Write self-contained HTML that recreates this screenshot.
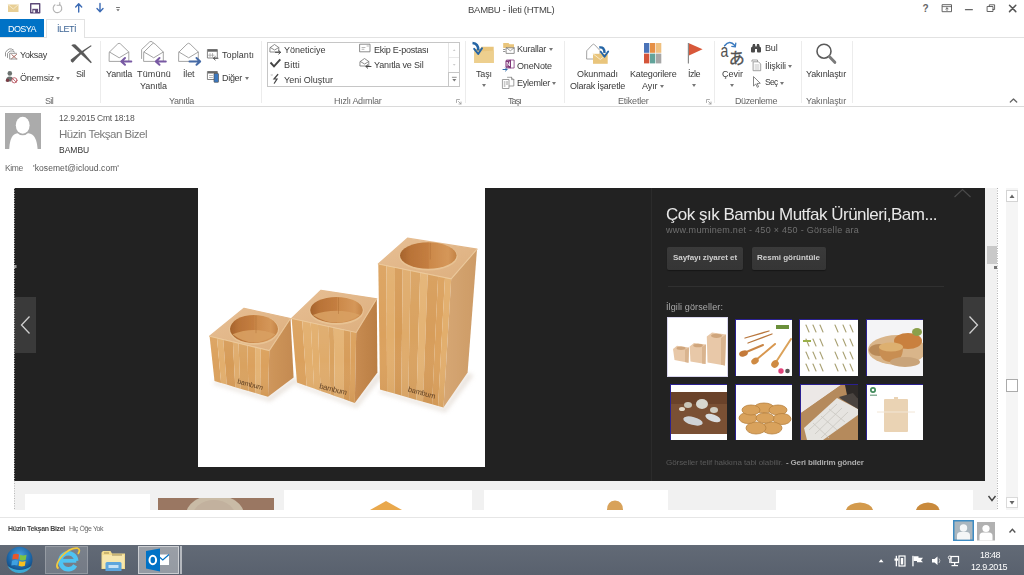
<!DOCTYPE html>
<html lang="tr">
<head>
<meta charset="utf-8">
<title>BAMBU - İleti (HTML)</title>
<style>
*{margin:0;padding:0;box-sizing:border-box}
html,body{width:1024px;height:575px;overflow:hidden;background:#fff}
body{position:relative;font-family:"Liberation Sans",sans-serif;color:#444;font-size:9px;line-height:1}
.a{position:absolute}
.t{position:absolute;white-space:nowrap;z-index:5;will-change:transform}
svg{position:absolute;overflow:visible}
#dosya{left:0;top:19px;width:44px;height:18px;background:#0072c6}
#ileti{left:46px;top:19px;width:39px;height:19px;background:#fff;border:1px solid #e2e2e2;border-bottom:none}
#tabline{left:85px;top:37px;width:939px;height:1px;background:#e2e2e2}
#tabline0{left:0;top:37px;width:46px;height:1px;background:#e2e2e2}
#ribbonline{left:0;top:106px;width:1024px;height:1px;background:#dadada}
.sep{position:absolute;top:41px;width:1px;height:62px;background:#ececec}
.dd{position:absolute;width:0;height:0;border-left:2.5px solid transparent;border-right:2.5px solid transparent;border-top:3px solid #777}
#dark{left:14px;top:188px;width:971px;height:293px;background:#222}
#photo{left:198px;top:188px;width:287px;height:279px;background:#fff}
#below{left:14px;top:481px;width:983px;height:29px;background:#f1f1f1}
#statusline{left:0;top:517px;width:1024px;height:1px;background:#e6e6e6}
#taskbar{left:0;top:545px;width:1024px;height:30px;background:linear-gradient(#626a76,#59616e)}
.card{position:absolute;background:#fff;top:490px;height:20px}
.btn{position:absolute;top:247px;height:22.500px;background:linear-gradient(#3a3a3a,#353535);border-radius:2px;box-shadow:0 1px 1px rgba(0,0,0,.35)}
.th{position:absolute;background:#fff;border-top:1px solid #2a2090;border-left:1px solid #2a2090;overflow:hidden}
</style>
</head>
<body>
<!-- TABS -->
<div class="a" id="tabline0"></div>
<div class="a" id="tabline"></div>
<div class="a" id="dosya"></div>
<div class="a" id="ileti"></div>
<!-- RIBBON -->
<div class="a" id="ribbonline"></div>
<div class="sep" style="left:100px"></div>
<div class="sep" style="left:261px"></div>
<div class="sep" style="left:465px"></div>
<div class="sep" style="left:564px"></div>
<div class="sep" style="left:714px"></div>
<div class="sep" style="left:801px"></div>
<div class="sep" style="left:852px"></div>
<!-- quick steps box -->
<div class="a" style="left:267px;top:42px;width:193px;height:45px;border:1px solid #c6c6c6;background:#fff"></div>
<div class="a" style="left:448px;top:43px;width:1px;height:29px;background:#e4e4e4"></div>
<div class="a" style="left:449px;top:57px;width:10px;height:1px;background:#e9e9e9"></div>
<div class="a" style="left:448px;top:72px;width:12px;height:15px;border:1px solid #c6c6c6;background:#fff"></div>
<!-- dropdown arrows -->
<div class="dd" style="left:55.6px;top:76.5px"></div>
<div class="dd" style="left:244.5px;top:76.5px"></div>
<div class="dd" style="left:482px;top:84px"></div>
<div class="dd" style="left:548.5px;top:48px"></div>
<div class="dd" style="left:552px;top:81.500px"></div>
<div class="dd" style="left:659.500px;top:85px"></div>
<div class="dd" style="left:691.500px;top:84px"></div>
<div class="dd" style="left:729.500px;top:84px"></div>
<div class="dd" style="left:788px;top:64.500px"></div>
<div class="dd" style="left:779.500px;top:82px"></div>
<!-- BODY -->
<div class="a" id="below"></div>
<div class="a" id="dark"></div>
<div class="a" id="photo"></div>
<!-- STATUS -->
<div class="a" id="statusline"></div>
<!-- TASKBAR -->
<div class="a" id="taskbar"></div>

<!-- TEXT -->
<div class="t" style="left:467.5px;top:3.5px;font-size:9.5px;line-height:12px;color:#444;letter-spacing:-0.27px;">BAMBU - İleti (HTML)</div>
<div class="t" style="left:8.0px;top:22.5px;font-size:9px;line-height:12px;color:#fff;letter-spacing:-0.57px;">DOSYA</div>
<div class="t" style="left:56.5px;top:22.5px;font-size:9px;line-height:12px;color:#3b6394;letter-spacing:-0.50px;">İLETİ</div>
<div class="t" style="left:20.0px;top:48.5px;font-size:9px;line-height:12px;color:#3a3a3a;letter-spacing:-0.28px;">Yoksay</div>
<div class="t" style="left:20.0px;top:72.0px;font-size:9px;line-height:12px;color:#3a3a3a;letter-spacing:-0.22px;">Önemsiz</div>
<div class="t" style="left:76.0px;top:68.0px;font-size:9px;line-height:12px;color:#3a3a3a;letter-spacing:-0.34px;">Sil</div>
<div class="t" style="left:45.0px;top:94.7px;font-size:9px;line-height:12px;color:#666;letter-spacing:-0.67px;">Sil</div>
<div class="t" style="left:106.0px;top:68.0px;font-size:9px;line-height:12px;color:#3a3a3a;letter-spacing:-0.19px;">Yanıtla</div>
<div class="t" style="left:137.0px;top:68.0px;font-size:9px;line-height:12px;color:#3a3a3a;letter-spacing:0.16px;">Tümünü</div>
<div class="t" style="left:140.0px;top:80.0px;font-size:9px;line-height:12px;color:#3a3a3a;letter-spacing:-0.05px;">Yanıtla</div>
<div class="t" style="left:183.0px;top:68.0px;font-size:9px;line-height:12px;color:#3a3a3a;letter-spacing:-0.13px;">İlet</div>
<div class="t" style="left:222.0px;top:48.5px;font-size:9px;line-height:12px;color:#3a3a3a;letter-spacing:0.06px;">Toplantı</div>
<div class="t" style="left:222.0px;top:72.0px;font-size:9px;line-height:12px;color:#3a3a3a;letter-spacing:-0.30px;">Diğer</div>
<div class="t" style="left:169.0px;top:94.7px;font-size:9px;line-height:12px;color:#666;letter-spacing:-0.34px;">Yanıtla</div>
<div class="t" style="left:284.0px;top:44.0px;font-size:9px;line-height:12px;color:#3a3a3a;letter-spacing:-0.00px;">Yöneticiye</div>
<div class="t" style="left:284.0px;top:59.0px;font-size:9px;line-height:12px;color:#3a3a3a;letter-spacing:0.20px;">Bitti</div>
<div class="t" style="left:284.0px;top:74.0px;font-size:9px;line-height:12px;color:#3a3a3a;letter-spacing:0.02px;">Yeni Oluştur</div>
<div class="t" style="left:374.0px;top:44.0px;font-size:9px;line-height:12px;color:#3a3a3a;letter-spacing:-0.25px;">Ekip E-postası</div>
<div class="t" style="left:374.0px;top:59.0px;font-size:9px;line-height:12px;color:#3a3a3a;letter-spacing:-0.17px;">Yanıtla ve Sil</div>
<div class="t" style="left:333.5px;top:94.7px;font-size:9px;line-height:12px;color:#666;letter-spacing:-0.27px;">Hızlı Adımlar</div>
<div class="t" style="left:476.0px;top:68.0px;font-size:9px;line-height:12px;color:#3a3a3a;letter-spacing:-0.13px;">Taşı</div>
<div class="t" style="left:517.0px;top:43.0px;font-size:9px;line-height:12px;color:#3a3a3a;letter-spacing:-0.25px;">Kurallar</div>
<div class="t" style="left:517.0px;top:59.5px;font-size:9px;line-height:12px;color:#3a3a3a;letter-spacing:-0.15px;">OneNote</div>
<div class="t" style="left:517.0px;top:76.5px;font-size:9px;line-height:12px;color:#3a3a3a;letter-spacing:-0.25px;">Eylemler</div>
<div class="t" style="left:508.0px;top:94.7px;font-size:9px;line-height:12px;color:#666;letter-spacing:-0.88px;">Taşı</div>
<div class="t" style="left:577.0px;top:68.0px;font-size:9px;line-height:12px;color:#3a3a3a;letter-spacing:-0.07px;">Okunmadı</div>
<div class="t" style="left:570.0px;top:80.0px;font-size:9px;line-height:12px;color:#3a3a3a;letter-spacing:-0.24px;">Olarak İşaretle</div>
<div class="t" style="left:629.5px;top:68.0px;font-size:9px;line-height:12px;color:#3a3a3a;letter-spacing:-0.17px;">Kategorilere</div>
<div class="t" style="left:642.0px;top:80.0px;font-size:9px;line-height:12px;color:#3a3a3a;letter-spacing:-0.09px;">Ayır</div>
<div class="t" style="left:688.0px;top:68.0px;font-size:9px;line-height:12px;color:#3a3a3a;letter-spacing:-0.50px;">İzle</div>
<div class="t" style="left:617.5px;top:94.7px;font-size:9px;line-height:12px;color:#666;letter-spacing:-0.22px;">Etiketler</div>
<div class="t" style="left:722.0px;top:68.4px;font-size:9px;line-height:12px;color:#3a3a3a;letter-spacing:-0.00px;">Çevir</div>
<div class="t" style="left:765.0px;top:42.4px;font-size:9px;line-height:12px;color:#3a3a3a;letter-spacing:-0.17px;">Bul</div>
<div class="t" style="left:765.0px;top:59.8px;font-size:9px;line-height:12px;color:#3a3a3a;letter-spacing:-0.06px;">İlişkili</div>
<div class="t" style="left:765.0px;top:77.2px;font-size:8.5px;line-height:11px;color:#3a3a3a;letter-spacing:-0.69px;">Seç</div>
<div class="t" style="left:735.4px;top:94.6px;font-size:9px;line-height:12px;color:#666;letter-spacing:-0.38px;">Düzenleme</div>
<div class="t" style="left:806.0px;top:68.4px;font-size:9px;line-height:12px;color:#3a3a3a;letter-spacing:-0.17px;">Yakınlaştır</div>
<div class="t" style="left:806.0px;top:94.6px;font-size:9px;line-height:12px;color:#666;letter-spacing:-0.17px;">Yakınlaştır</div>
<div class="t" style="left:58.6px;top:112.5px;font-size:8.5px;line-height:11px;color:#555;letter-spacing:-0.21px;">12.9.2015 Cmt 18:18</div>
<div class="t" style="left:58.6px;top:127.1px;font-size:11.5px;line-height:15px;color:#7a7a7a;letter-spacing:-0.50px;">Hüzin Tekşan Bizel</div>
<div class="t" style="left:58.6px;top:145.2px;font-size:8.5px;line-height:11px;color:#333;letter-spacing:-0.01px;">BAMBU</div>
<div class="t" style="left:5.3px;top:163.4px;font-size:8.5px;line-height:11px;color:#666;letter-spacing:-0.42px;">Kime</div>
<div class="t" style="left:33.0px;top:163.4px;font-size:8.5px;line-height:11px;color:#555;letter-spacing:0.07px;">'kosemet@icloud.com'</div>
<div class="t" style="left:666.0px;top:204.0px;font-size:17px;line-height:22px;color:#e8e8e8;letter-spacing:-0.50px;">Çok şık Bambu Mutfak Ürünleri,Bam...</div>
<div class="t" style="left:666.0px;top:223.9px;font-size:9px;line-height:12px;color:#707070;letter-spacing:0.28px;">www.muminem.net - 450 × 450 - Görselle ara</div>
<div class="t" style="left:673.0px;top:253.4px;font-size:8px;line-height:10px;color:#d0d0d0;letter-spacing:-0.05px;font-weight:700;">Sayfayı ziyaret et</div>
<div class="t" style="left:757.0px;top:253.4px;font-size:8px;line-height:10px;color:#d0d0d0;letter-spacing:-0.01px;font-weight:700;">Resmi görüntüle</div>
<div class="t" style="left:666.0px;top:300.8px;font-size:9px;line-height:12px;color:#aaa;letter-spacing:0.12px;">İlgili görseller:</div>
<div class="t" style="left:666.0px;top:458.0px;font-size:8px;line-height:10px;color:#5a5a5a;letter-spacing:-0.07px;">Görseller telif hakkına tabi olabilir.</div>
<div class="t" style="left:786.0px;top:458.0px;font-size:8px;line-height:10px;color:#ababab;letter-spacing:-0.17px;font-weight:700;">- Geri bildirim gönder</div>
<div class="t" style="left:7.5px;top:523.5px;font-size:7px;line-height:9px;color:#444;letter-spacing:-0.33px;font-weight:700;">Hüzin Tekşan Bizel</div>
<div class="t" style="left:68.8px;top:523.5px;font-size:7px;line-height:9px;color:#666;letter-spacing:-0.39px;">Hiç Öğe Yok</div>
<div class="t" style="left:979.5px;top:549.0px;font-size:9px;line-height:12px;color:#fff;letter-spacing:-0.51px;">18:48</div>
<div class="t" style="left:971.0px;top:561.0px;font-size:9px;line-height:12px;color:#fff;letter-spacing:-0.45px;">12.9.2015</div>
<!-- ICONS -->
<svg class="a" style="left:0;top:0" width="1024" height="120" viewBox="0 0 1024 120" fill="none" stroke-linecap="round" stroke-linejoin="round">
<!-- quick access toolbar -->
<g>
<rect x="8" y="4.500" width="10.500" height="7.500" fill="#e8cf96" stroke="none"/>
<path d="M8,4.500 L13.250,9 L18.500,4.500" stroke="#f6ecd0" stroke-width=".9"/>
<rect x="30.700" y="3.700" width="9" height="9" fill="#fff" stroke="#5d4a78" stroke-width="1.400"/>
<rect x="32.300" y="8.800" width="5.800" height="3.800" fill="#5d4a78" stroke="none"/>
<rect x="33.300" y="10.300" width="1.800" height="2.300" fill="#fff" stroke="none"/>
<path d="M55,4.800 A4.300,4.300 0 1 0 59.600,4.600" stroke="#b3b3b3" stroke-width="1.100"/>
<path d="M59.800,2.500 L59.800,5.300 L57,5.300" stroke="#b3b3b3" stroke-width="1"/>
<path d="M78.700,12 L78.700,4 M75.700,7 L78.700,3.800 L81.700,7" stroke="#3c6bb4" stroke-width="1.400"/>
<path d="M100,3.500 L100,11.500 M97,8.500 L100,11.700 L103,8.500" stroke="#3c6bb4" stroke-width="1.400"/>
<path d="M116.500,7.500 L119.500,7.500" stroke="#666" stroke-width=".9"/>
<path d="M116.300,9.300 L119.700,9.300 L118,11.300 Z" fill="#666" stroke="none"/>
</g>
<!-- window controls -->
<g stroke="#555">
<text x="922.600" y="12" font-family="Liberation Sans,sans-serif" font-size="10" font-weight="700" fill="#666" stroke="none">?</text>
<rect x="942.500" y="4.700" width="9" height="7" stroke-width=".9"/>
<path d="M942.500,6.600 L951.500,6.600 M947,10.500 L947,7.800 M945.800,9 L947,7.800 L948.200,9" stroke-width=".8"/>
<path d="M965.500,9.700 L972.300,9.700" stroke-width="1.300" stroke="#666"/>
<rect x="987.500" y="6.500" width="5.500" height="5" stroke-width=".9"/>
<path d="M989.300,6.500 L989.300,4.800 L994.600,4.800 L994.600,9.500 L993,9.500" stroke-width=".9"/>
<path d="M1009.500,5.200 L1015.800,11.600 M1015.800,5.200 L1009.500,11.600" stroke-width="1.500" stroke="#555"/>
<path d="M1010.300,102 L1013.500,99 L1016.700,102" stroke-width="1.300" stroke="#666"/>
</g>
<!-- Yoksay -->
<g stroke="#8a8a8a" stroke-width=".9">
<path d="M5.500,56 L5.500,52.500 Q9,46.500 13.500,50"/>
<path d="M7.500,57.500 L7.500,53.500 Q10.500,49 14.500,52"/>
<path d="M9.700,59 L9.700,53.300 L16.500,53.300"/>
<path d="M11.500,58.800 L16.500,54.500 M11.800,54.700 L16.500,58.800" stroke="#a05a50"/>
<path d="M10.500,59 L17,59" />
</g>
<!-- Önemsiz -->
<g stroke="none">
<circle cx="9.800" cy="73.400" r="2.300" fill="#6b726f"/>
<path d="M5.800,81.500 Q5.800,76.500 9.800,76.500 Q12.500,76.500 13,78.500 L11,81.500Z" fill="#6b726f"/>
<circle cx="7.600" cy="80.300" r="1.700" fill="#7a3d46"/>
<circle cx="14.400" cy="80.300" r="2.600" fill="#fff" stroke="#b85560" stroke-width=".9"/>
<path d="M12.600,78.500 L16.200,82.100" stroke="#b85560" stroke-width=".9"/>
</g>
<!-- Sil X -->
<g fill="#5a5a5a" stroke="none">
<path d="M71.300,45.300 Q73,43.600 75.500,44.400 Q84,52 91.800,62.300 L90.900,63.200 Q81,54.500 71.300,45.300Z"/>
<path d="M91.700,46 L90.900,45.200 Q80,51.500 70.600,59.800 Q70.300,62 72.800,62.800 Q81,53 91.700,46Z"/>
</g>
<!-- Yanıtla -->
<g id="env1" stroke="#9a9a9a" stroke-width=".9">
<path d="M109.500,52 L117.600,44 Q119.100,42.500 120.600,44 L128.800,52 L128.800,61.400 L109.500,61.400 Z" fill="#fff"/>
<path d="M109.500,52 L119.200,57.800 L128.800,52"/>
</g>
<path d="M131.300,61.400 L122,61.400 M125,58 L121.300,61.400 L125,64.800" stroke="#7859a3" stroke-width="2"/>
<!-- Tümünü Yanıtla -->
<g stroke="#9a9a9a" stroke-width=".9">
<path d="M141.600,58.500 L141.600,49.500 L149.500,42 Q151,40.800 152.500,42 L153.500,43"/>
<path d="M144,52 L152.100,44 Q153.600,42.500 155.100,44 L163.300,52 L163.300,61.400 L144,61.400 Z" fill="#fff"/>
<path d="M144,52 L153.700,57.800 L163.300,52"/>
</g>
<path d="M165.800,61.400 L156.500,61.400 M159.500,58 L155.800,61.400 L159.500,64.800" stroke="#7859a3" stroke-width="2"/>
<!-- İlet -->
<g stroke="#9a9a9a" stroke-width=".9">
<path d="M179,52 L187.100,44 Q188.600,42.500 190.100,44 L198.300,52 L198.300,61.400 L179,61.400 Z" fill="#fff"/>
<path d="M179,52 L188.700,57.800 L198.300,52"/>
</g>
<path d="M189.500,61.400 L199.500,61.400 M196.500,58 L200.200,61.400 L196.500,64.800" stroke="#456aa6" stroke-width="2"/>
<!-- Toplantı -->
<g>
<rect x="207.800" y="49.500" width="9.500" height="8.500" stroke="#777" stroke-width=".9" fill="#fff"/>
<rect x="207.800" y="49.500" width="9.500" height="2.200" fill="#666" stroke="none"/>
<path d="M210,53.500 L210,57 M212.500,53.500 L212.500,57 M208.500,55.200 L214,55.200" stroke="#999" stroke-width=".7"/>
<path d="M218,58.300 L213.500,58.300 M215.200,56.600 L213.400,58.300 L215.200,60" stroke="#555" stroke-width="1"/>
</g>
<!-- Diğer -->
<g>
<rect x="207.800" y="71.500" width="9.500" height="8" stroke="#777" stroke-width=".9" fill="#fff"/>
<rect x="207.800" y="71.500" width="9.500" height="2" fill="#666" stroke="none"/>
<path d="M209.500,75.500 L212.500,75.500 M209.500,77.500 L212.500,77.500" stroke="#999" stroke-width=".7"/>
<rect x="214" y="73.500" width="4.500" height="8.800" rx=".6" fill="#3b78c0" stroke="#555" stroke-width=".7"/>
</g>
<!-- Quick steps icons -->
<g stroke="#777" stroke-width=".85">
<path d="M270.300,47.500 L274.500,44.500 L278.800,47.500 L278.800,52 L270.300,52 Z" fill="#fff"/>
<path d="M270.300,47.500 L274.600,50 L278.800,47.500"/>
<path d="M275.500,52.300 L280.500,52.300 M278.800,50.600 L280.600,52.300 L278.800,54" stroke="#444" stroke-width="1"/>
<path d="M270.500,62.500 L274,66.300 L280.300,59.300" stroke="#444" stroke-width="1.900" stroke-linecap="butt" stroke-linejoin="miter"/>
<path d="M277.800,74.500 L274,79 L277,79 L274.300,83.200" stroke="#444" stroke-width="1.200" stroke-linejoin="miter"/>
<path d="M271,74.300 L272.500,75.800 M272.500,74.300 L271,75.800" stroke="#bbb" stroke-width=".6"/>
<rect x="360" y="44.200" width="10" height="7.600" fill="#fff"/>
<path d="M362,47.500 L365,47.500 M362,49.300 L364,49.300 M367,46 L368.500,46" stroke="#999" stroke-width=".7"/>
<path d="M360.300,61.500 L364.500,58.500 L368.800,61.500 L368.800,66 L360.300,66 Z" fill="#fff"/>
<path d="M360.300,61.500 L364.600,64 L368.800,61.500"/>
<path d="M371,66.500 L366,66.500 M367.700,64.800 L365.900,66.500 L367.700,68.200" stroke="#444" stroke-width="1"/>
</g>
<!-- quick steps scroll glyphs -->
<g stroke="none">
<path d="M452.800,51 L455.600,51 L454.200,49.300Z" fill="#ccc"/>
<path d="M452.800,64 L455.600,64 L454.200,65.700Z" fill="#ccc"/>
<path d="M452.300,77.300 L456.300,77.300" stroke="#777" stroke-width=".8"/>
<path d="M452.300,79 L456.300,79 L454.300,81.500Z" fill="#777"/>
</g>
<!-- dialog launchers -->
<g stroke="#999" stroke-width=".8">
<path d="M456.500,102.500 L456.500,99.500 L459.500,99.500 M458.500,101.500 L461,104 M461,102 L461,104 L459,104"/>
<path d="M706.500,102.500 L706.500,99.500 L709.500,99.500 M708.500,101.500 L711,104 M711,102 L711,104 L709,104"/>
</g>
<!-- Taşı -->
<g stroke="none">
<path d="M474.300,49 L480,49 L481.500,46.800 L493.700,46.800 L493.700,63 L474.300,63 Z" fill="#e9c57c"/>
<path d="M474.300,52 L493.700,50.500 L493.700,63 L474.300,63Z" fill="#edcf8e"/>
<path d="M472.500,43 Q478.500,43.500 478.300,50.500" stroke="#2565a5" stroke-width="2.600" fill="none" stroke-linecap="butt"/>
<path d="M474.200,48.800 L478.200,54 L482,48.300" stroke="#2565a5" stroke-width="2" fill="none"/>
</g>
<!-- Kurallar -->
<g>
<path d="M503.200,43 L508.500,43 L509.500,44.200 L514,44.200 L514,48 L503.200,48Z" fill="#e9c57c" stroke="none"/>
<rect x="506.500" y="47.800" width="7.700" height="5.600" fill="#fff" stroke="#777" stroke-width=".8"/>
<path d="M506.500,47.800 L510.300,50.800 L514.200,47.800" stroke="#777" stroke-width=".7"/>
<path d="M503.500,49.500 L505,49.500 M503.500,51.500 L505,51.500" stroke="#777" stroke-width=".8"/>
</g>
<!-- OneNote -->
<g stroke="none">
<rect x="506.800" y="60" width="7.300" height="8" fill="#fff" stroke="#80397b" stroke-width=".8"/>
<path d="M505.500,60.800 L511,59.800 L511,68.300 L505.500,67.300Z" fill="#80397b"/>
<path d="M507,66 L507,62 L509.500,66 L509.500,62" stroke="#fff" stroke-width=".8" fill="none"/>
<path d="M503,69.500 L507,69.500 M505.500,68 L507,69.500 L505.500,71" stroke="#2c6aa8" stroke-width="1" fill="none"/>
</g>
<!-- Eylemler -->
<g stroke="#888" stroke-width=".8">
<path d="M502.800,79.500 L509,79.500 L509,88.500 L502.800,88.500Z" fill="#fff"/>
<path d="M507.500,77.300 L511.500,77.300 L513.800,79.600 L513.800,86 L509.300,86" />
<path d="M511.500,77.300 L511.500,79.600 L513.800,79.600"/>
<path d="M504.200,82 L505,82 M506.500,82 L507.500,82 M504.200,84 L505,84 M506.500,84 L507.500,84 M504.200,86 L505,86" stroke="#777"/>
</g>
<!-- Okunmadı -->
<g>
<path d="M587,50.500 L592.300,44.800 Q593.500,43.500 594.700,44.800 L600,50.500 L600,59 L587,59Z" stroke="#9a9a9a" stroke-width=".9" fill="#fff"/>
<rect x="593" y="53.800" width="14.700" height="10" fill="#e9c57c" stroke="none"/>
<path d="M593,53.800 L600.300,59.500 L607.700,53.800" stroke="#f7ecd2" stroke-width=".9"/>
<path d="M599.300,47.500 Q604.500,46.500 604.500,53" stroke="#2565a5" stroke-width="2.400" stroke-linecap="butt"/>
<path d="M600.800,51.800 L604.500,56.800 L608.200,51.500" stroke="#2565a5" stroke-width="1.900"/>
</g>
<!-- Kategorilere -->
<g stroke="none">
<rect x="644" y="43" width="5.300" height="9.800" fill="#4a73b8"/>
<rect x="650" y="43" width="5.300" height="9.800" fill="#e58f45"/>
<rect x="656" y="43" width="5.300" height="9.800" fill="#efc07f"/>
<rect x="644" y="53.600" width="5.300" height="9.800" fill="#d4553a"/>
<rect x="650" y="53.600" width="5.300" height="9.800" fill="#62a39a"/>
<rect x="656" y="53.600" width="5.300" height="9.800" fill="#a6a6a6"/>
</g>
<!-- İzle -->
<g stroke="none">
<rect x="687.800" y="43" width="1.200" height="20.500" fill="#8a8a8a"/>
<path d="M689,43.300 L702.600,49.300 L689,55.500Z" fill="#d8583a"/>
</g>
<!-- Çevir -->
<g stroke="none">
<text transform="translate(720.500,57) scale(.76,1)" font-family="Liberation Sans,sans-serif" font-size="18.500" fill="#505050">a</text>
<text x="728.800" y="64.300" font-family="Liberation Sans,Noto Sans CJK JP,sans-serif" font-size="16" fill="#505050" stroke="#505050" stroke-width=".35">あ</text>
<path d="M724.600,45.800 Q729.500,39.500 734.800,45.500" stroke="#3a7abf" stroke-width="1.500" fill="none"/>
<path d="M731.800,46.300 L735.300,46.800 L735.800,43.200" stroke="#3a7abf" stroke-width="1.300" fill="none"/>
</g>
<!-- Bul -->
<g fill="#4a4a4a" stroke="none">
<rect x="751" y="47" width="4" height="5.500" rx="1"/>
<rect x="757" y="47" width="4" height="5.500" rx="1"/>
<path d="M752,47.500 L753,44 L755,44 L755.500,47.500Z M756.500,47.500 L757,44 L759,44 L760,47.500Z"/>
<rect x="754.500" y="46.500" width="3" height="2.500"/>
</g>
<!-- İlişkili -->
<g stroke="#888" stroke-width=".8">
<path d="M752,61.500 L752,60 L757.500,60 L757.500,61.500"/>
<path d="M753.500,61.800 L758.500,61.800 L760.700,64 L760.700,70.700 L753.500,70.700Z" fill="#fff"/>
<path d="M755,65 L759,65 M755,67 L759,67 M755,69 L759,69" stroke="#aaa" stroke-width=".7"/>
</g>
<!-- Seç -->
<path d="M753.500,77 L753.500,86 L755.800,84 L757.300,87.300 L758.600,86.700 L757.100,83.500 L759.900,83.300Z" stroke="#666" stroke-width=".8" fill="#fff"/>
<!-- Yakınlaştır -->
<g>
<circle cx="824" cy="51.200" r="7" stroke="#5a5a5a" stroke-width="1.600" fill="#fff"/>
<path d="M829.500,56.800 L834.800,62.300" stroke="#7a7a7a" stroke-width="3"/>
</g>
</svg>
<!-- header avatar -->
<svg class="a" style="left:5px;top:113px" width="36" height="36" viewBox="0 0 36 36">
<rect width="36" height="36" fill="#ababab"/>
<path d="M4.200,36 Q5,21 12.500,20.300 L23.500,20.300 Q31.500,21 32.600,36Z" fill="#fff"/>
<ellipse cx="17.700" cy="12.600" rx="8.200" ry="9.700" fill="#ababab"/>
<ellipse cx="17.700" cy="12.300" rx="6.900" ry="8.500" fill="#fff"/>
</svg>
<svg id="wood" class="a" style="left:0;top:0" width="1024" height="575" viewBox="0 0 1024 575">
<defs>
<linearGradient id="wt" x1="0" x2="1" y1="0" y2="1"><stop offset="0" stop-color="#e7bf94"/><stop offset="1" stop-color="#ddaf7e"/></linearGradient>
<linearGradient id="wh" x1="0" x2="1" y1="0" y2="0"><stop offset="0" stop-color="#a5632c"/><stop offset=".18" stop-color="#b97338"/><stop offset=".5" stop-color="#c47e40"/><stop offset=".52" stop-color="#cb8849"/><stop offset=".85" stop-color="#d59759"/><stop offset="1" stop-color="#c38245"/></linearGradient>
<linearGradient id="shade" x1="0" x2="0" y1="0" y2="1"><stop offset="0" stop-color="#fff" stop-opacity=".06"/><stop offset=".5" stop-color="#fff" stop-opacity="0"/><stop offset="1" stop-color="#8a5220" stop-opacity=".12"/></linearGradient>
<filter id="bl" x="-20%" y="-20%" width="140%" height="140%"><feGaussianBlur stdDeviation="2.200"/></filter>
<filter id="b1"><feGaussianBlur stdDeviation=".5"/></filter>
</defs>
<g fill="#d9cfc4" opacity=".55" filter="url(#bl)">
<polygon points="214.5,381.0 213.5,384.0 270.0,401.8 299.6,380.5 293.6,377.5 268.0,396.8"/>
<polygon points="297.0,382.5 296.0,385.5 356.8,408.0 383.4,375.5 377.4,372.5 354.8,403.0"/>
<polygon points="380.0,389.5 379.0,392.5 445.5,412.6 473.6,375.5 467.6,372.5 443.5,407.6"/>
</g>
<g filter="url(#b1)">
<polygon points="209.6,336.2 244.0,308.3 290.5,318.5 269.3,350.6" fill="url(#wt)" stroke="url(#wt)" stroke-width="1.200" stroke-linejoin="round"/>
<polygon points="209.6,336.2 217.0,338.0 221.1,383.0 214.5,381.0" fill="#dba15d"/>
<polygon points="217.0,338.0 223.2,339.5 226.7,384.6 221.1,383.0" fill="#e2ae6c"/>
<polygon points="223.2,339.5 232.9,341.8 235.3,387.2 226.7,384.6" fill="#d69b57"/>
<polygon points="232.9,341.8 238.5,343.2 240.4,388.7 235.3,387.2" fill="#dfab6b"/>
<polygon points="238.5,343.2 247.4,345.3 248.4,391.0 240.4,388.7" fill="#d9a260"/>
<polygon points="247.4,345.3 255.1,347.2 255.2,393.0 248.4,391.0" fill="#dba15d"/>
<polygon points="255.1,347.2 260.6,348.5 260.2,394.5 255.2,393.0" fill="#e4b374"/>
<polygon points="260.6,348.5 269.3,350.6 268.0,396.8 260.2,394.5" fill="#dba15d"/>
<polygon points="209.6,336.2 269.3,350.6 268.0,396.8 214.5,381.0" fill="url(#shade)"/>
<linearGradient id="ws_small" x1="0" x2="1" y1="0" y2="0"><stop offset="0" stop-color="#cf975c"/><stop offset="1" stop-color="#c48a50"/></linearGradient>
<polygon points="269.3,350.6 290.5,318.5 293.6,377.5 268.0,396.8" fill="url(#ws_small)"/>
<polyline points="209.6,336.2 269.3,350.6 290.5,318.5" fill="none" stroke="#efd0a4" stroke-width="1.100" opacity=".8"/>
<ellipse cx="254.0" cy="329.8" rx="25.0" ry="15.0" fill="#e8c394"/>
<ellipse cx="254.0" cy="329.0" rx="24.0" ry="14.0" fill="url(#wh)"/>
<path d="M232.4,334.3 Q254.0,325.5 275.6,334.3 Q254.0,350.7 232.4,334.3Z" fill="#d8a062" opacity=".9"/>
<path d="M256.0,315.5 L256.0,333.2" stroke="#a8672f" stroke-width=".7" opacity=".6"/>
<text transform="translate(237.0,383.3) rotate(15)" font-family="Liberation Sans,sans-serif" font-size="7" fill="#5f3f22" letter-spacing="-.2">bambum</text>
</g>
<g filter="url(#b1)">
<polygon points="291.6,318.5 321.0,290.3 376.8,298.8 356.2,332.5" fill="url(#wt)" stroke="url(#wt)" stroke-width="1.200" stroke-linejoin="round"/>
<polygon points="291.6,318.5 302.3,320.8 306.6,385.9 297.0,382.5" fill="#dba15d"/>
<polygon points="302.3,320.8 310.7,322.6 314.1,388.6 306.6,385.9" fill="#e2ae6c"/>
<polygon points="310.7,322.6 317.9,324.2 320.6,390.9 314.1,388.6" fill="#e2ae6c"/>
<polygon points="317.9,324.2 328.8,326.6 330.3,394.3 320.6,390.9" fill="#dfab6b"/>
<polygon points="328.8,326.6 333.8,327.7 334.8,395.9 330.3,394.3" fill="#d9a260"/>
<polygon points="333.8,327.7 344.0,329.9 343.9,399.1 334.8,395.9" fill="#e4b374"/>
<polygon points="344.0,329.9 350.6,331.3 349.8,401.2 343.9,399.1" fill="#d79d5a"/>
<polygon points="350.6,331.3 356.2,332.5 354.8,403.0 349.8,401.2" fill="#dba15d"/>
<polygon points="291.6,318.5 356.2,332.5 354.8,403.0 297.0,382.5" fill="url(#shade)"/>
<linearGradient id="ws_medium" x1="0" x2="1" y1="0" y2="0"><stop offset="0" stop-color="#c88c52"/><stop offset="1" stop-color="#ba7e44"/></linearGradient>
<polygon points="356.2,332.5 376.8,298.8 377.4,372.5 354.8,403.0" fill="url(#ws_medium)"/>
<polyline points="291.6,318.5 356.2,332.5 376.8,298.8" fill="none" stroke="#efd0a4" stroke-width="1.100" opacity=".8"/>
<ellipse cx="336.5" cy="310.8" rx="27.3" ry="14.0" fill="#e8c394"/>
<ellipse cx="336.5" cy="310.0" rx="26.3" ry="13.0" fill="url(#wh)"/>
<path d="M312.8,314.9 Q336.5,306.8 360.2,314.9 Q336.5,330.1 312.8,314.9Z" fill="#d8a062" opacity=".9"/>
<path d="M338.5,297.5 L338.5,313.9" stroke="#a8672f" stroke-width=".7" opacity=".6"/>
<text transform="translate(319.0,388.3) rotate(14)" font-family="Liberation Sans,sans-serif" font-size="7.5" fill="#5f3f22" letter-spacing="-.2">bambum</text>
</g>
<g filter="url(#b1)">
<polygon points="378.3,264.0 407.5,238.2 477.0,249.2 451.2,278.9" fill="url(#wt)" stroke="url(#wt)" stroke-width="1.200" stroke-linejoin="round"/>
<polygon points="378.3,264.0 386.5,265.7 387.1,391.5 380.0,389.5" fill="#dba15d"/>
<polygon points="386.5,265.7 395.0,267.4 394.5,393.6 387.1,391.5" fill="#e2ae6c"/>
<polygon points="395.0,267.4 402.7,269.0 401.3,395.6 394.5,393.6" fill="#d69b57"/>
<polygon points="402.7,269.0 410.7,270.6 408.2,397.5 401.3,395.6" fill="#dfab6b"/>
<polygon points="410.7,270.6 420.2,272.6 416.5,399.9 408.2,397.5" fill="#d9a260"/>
<polygon points="420.2,272.6 427.7,274.1 423.0,401.8 416.5,399.9" fill="#e4b374"/>
<polygon points="427.7,274.1 438.1,276.2 432.1,404.3 423.0,401.8" fill="#d79d5a"/>
<polygon points="438.1,276.2 445.0,277.6 438.1,406.1 432.1,404.3" fill="#dba15d"/>
<polygon points="445.0,277.6 451.2,278.9 443.5,407.6 438.1,406.1" fill="#e2ae6c"/>
<polygon points="378.3,264.0 451.2,278.9 443.5,407.6 380.0,389.5" fill="url(#shade)"/>
<linearGradient id="ws_tall" x1="0" x2="1" y1="0" y2="0"><stop offset="0" stop-color="#d6a774"/><stop offset="1" stop-color="#cd9b66"/></linearGradient>
<polygon points="451.2,278.9 477.0,249.2 467.6,372.5 443.5,407.6" fill="url(#ws_tall)"/>
<polyline points="378.3,264.0 451.2,278.9 477.0,249.2" fill="none" stroke="#efd0a4" stroke-width="1.100" opacity=".8"/>
<ellipse cx="428.3" cy="256.3" rx="29.3" ry="14.2" fill="#e8c394"/>
<ellipse cx="428.3" cy="255.5" rx="28.3" ry="13.2" fill="url(#wh)"/>
<path d="M430.3,242.8 L430.3,259.5" stroke="#a8672f" stroke-width=".7" opacity=".6"/>
<text transform="translate(407.5,391.5) rotate(15)" font-family="Liberation Sans,sans-serif" font-size="7.5" fill="#5f3f22" letter-spacing="-.2">bambum</text>
</g>
</svg>
<!-- PANEL -->
<div class="a" style="left:651px;top:188px;width:1px;height:293px;background:#2b2b2b"></div>
<!-- nav arrows -->
<div class="a" style="left:14px;top:297px;width:22px;height:56px;background:#3a3a3a"></div>
<div class="a" style="left:963px;top:297px;width:22px;height:56px;background:#3a3a3a"></div>
<svg class="a" style="left:0;top:0" width="1024" height="575" viewBox="0 0 1024 575" fill="none">
<path d="M29.500,316.500 L21.500,325 L29.500,333.500" stroke="#d0d0d0" stroke-width="1.300"/>
<path d="M969.500,316.500 L977.500,325 L969.500,333.500" stroke="#d0d0d0" stroke-width="1.300"/>
<path d="M954.500,197 L962.500,189.500 L970.500,197" stroke="#4a4a4a" stroke-width="1.200"/>
<rect x="14" y="265" width="2.500" height="3" fill="#999"/>
<path d="M14.500,188 L14.500,510" stroke="#b8b8b8" stroke-width="1" stroke-dasharray="1,1.500"/>
<path d="M997.500,188 L997.500,510" stroke="#b0b0b0" stroke-width="1" stroke-dasharray="1,1.500"/>
</svg>
<!-- buttons -->
<div class="btn" style="left:667px;width:75.500px"></div>
<div class="btn" style="left:751.500px;width:74px"></div>
<div class="a" style="left:668px;top:286px;width:276px;height:1px;background:#303030"></div>
<!-- inner scrollbar -->
<div class="a" style="left:985px;top:188px;width:12px;height:322px;background:#f1f1f1"></div>
<div class="a" style="left:987px;top:246px;width:10px;height:18px;background:#c9c9c9"></div>
<div class="a" style="left:994px;top:266px;width:3px;height:3px;background:#777"></div>
<!-- outer scrollbar -->
<div class="a" style="left:1006px;top:188px;width:12px;height:322px;background:#f5f5f5"></div>
<div class="a" style="left:1006px;top:190px;width:12px;height:12px;background:#fff;border:1px solid #d4d4d4"></div>
<div class="a" style="left:1006px;top:497px;width:12px;height:11px;background:#fff;border:1px solid #dadada"></div>
<div class="a" style="left:1006px;top:379px;width:12px;height:13px;background:#fff;border:1px solid #ababab"></div>
<svg class="a" style="left:0;top:0" width="1024" height="575" viewBox="0 0 1024 575">
<path d="M1009.500,198 L1014.500,198 L1012,194.500Z" fill="#666"/>
<path d="M1009.500,501 L1014.500,501 L1012,504.500Z" fill="#666"/>
<path d="M988.500,496 L992,500.500 L995.500,496" stroke="#444" stroke-width="1.400" fill="none"/>
</svg>
<!-- thumbnails -->
<div class="th" style="left:667px;top:316.500px;width:61px;height:60px;border:1.500px solid #d9d6ee">
<svg width="60" height="58" viewBox="0 0 60 58" style="left:0;top:0">
<path d="M5,31 L9,27.700 L21,29.500 L20.500,44.800 L6.500,42Z" fill="#e8c8a8"/><path d="M17,31.500 L21,29.500 L20.500,44.800 L17,44Z" fill="#d9b48f"/>
<path d="M21.600,28.500 L26,25 L38,26.500 L37.500,46 L22.500,43.500Z" fill="#e8c8a8"/><path d="M34,29 L38,26.500 L37.500,46 L34,45.500Z" fill="#d9b48f"/>
<path d="M38.800,18.500 L44,14.500 L58,16.500 L57,47.500 L39.500,44.500Z" fill="#e8c8a8"/><path d="M53,20 L58,16.500 L57,47.500 L53,46.800Z" fill="#d9b48f"/>
<ellipse cx="13" cy="30.300" rx="4.500" ry="1.700" fill="#cfa57c"/><ellipse cx="30" cy="27.500" rx="4.800" ry="1.800" fill="#cfa57c"/><ellipse cx="48.500" cy="17.800" rx="5.500" ry="2.100" fill="#cfa57c"/>
</svg></div>
<div class="th" style="left:735px;top:319px;width:57px;height:57px">
<svg width="56" height="56" viewBox="0 0 56 56" style="left:0;top:0" stroke-linecap="round">
<path d="M9,18 L33,11 M12,23 L36,14" stroke="#b9773d" stroke-width="1.300"/>
<path d="M8,33 L27,25" stroke="#c98545" stroke-width="2"/><ellipse cx="7.500" cy="33.500" rx="4.500" ry="3" fill="#c47a3a" transform="rotate(-20 7.500 33.500)"/>
<path d="M20,40 L39,24" stroke="#d8974f" stroke-width="2"/><ellipse cx="19" cy="41" rx="4" ry="3" fill="#cf8a42" transform="rotate(-35 19 41)"/>
<path d="M40,42 L55,19" stroke="#dba25a" stroke-width="2"/><ellipse cx="39" cy="44" rx="4" ry="3.500" fill="#cf8a42" transform="rotate(-50 39 44)"/>
<rect x="40" y="5" width="13" height="4" fill="#6a8f3a"/>
<circle cx="45" cy="51" r="2.700" fill="#e0457b"/><circle cx="51.500" cy="51" r="2.300" fill="#555"/>
</svg></div>
<div class="th" style="left:799px;top:319px;width:58.500px;height:57px">
<svg width="58" height="56" viewBox="0 0 58 56" style="left:0;top:0" stroke-linecap="round" stroke="#a8a072" stroke-width="1.100">
<g id="sp"><path d="M6,5 L9,12"/><path d="M13,5 L16,12"/><path d="M20,5 L23,12"/><path d="M35,5 L38,12"/><path d="M43,5 L46,12"/><path d="M50,5 L53,12"/></g>
<use href="#sp" y="14"/><use href="#sp" y="27"/><use href="#sp" y="39"/>
<rect x="3" y="20" width="8" height="2" fill="#9ab04a" stroke="none"/>
</svg></div>
<div class="th" style="left:866px;top:319px;width:57px;height:57px;background:#f4f4f6">
<svg width="56" height="56" viewBox="0 0 56 56" style="left:0;top:0">
<ellipse cx="30" cy="30" rx="29" ry="15" fill="#d9b58a"/>
<ellipse cx="41" cy="21" rx="14" ry="8" fill="#c9803e"/>
<ellipse cx="12" cy="30" rx="10" ry="6" fill="#b98a58"/>
<path d="M12,27 Q12,42 24,42 Q36,42 36,27Z" fill="#c88e52"/><ellipse cx="24" cy="27" rx="12" ry="4.500" fill="#ddb070"/>
<ellipse cx="38" cy="42" rx="15" ry="5" fill="#c9a47a"/>
<ellipse cx="50" cy="12" rx="5" ry="4" fill="#8aa04a"/>
</svg></div>
<div class="th" style="left:669.500px;top:383.500px;width:57px;height:56px">
<svg width="56" height="55" viewBox="0 0 56 55" style="left:0;top:0">
<rect x="0" y="7" width="56" height="42" fill="#7a5034"/>
<rect x="0" y="7" width="56" height="12" fill="#6a422a"/>
<ellipse cx="31" cy="19" rx="6" ry="5" fill="#d8d8d0"/><ellipse cx="17" cy="20" rx="4" ry="3" fill="#c9c6b8"/><ellipse cx="43" cy="25" rx="4" ry="3" fill="#d0cdc2"/>
<ellipse cx="22" cy="36" rx="10" ry="4" fill="#cfd3d6" transform="rotate(15 22 36)"/><ellipse cx="42" cy="33" rx="8" ry="3.500" fill="#d9dde0" transform="rotate(20 42 33)"/>
<ellipse cx="11" cy="24" rx="3" ry="2" fill="#e4dccb"/>
</svg></div>
<div class="th" style="left:735px;top:383.500px;width:57px;height:56px">
<svg width="56" height="55" viewBox="0 0 56 55" style="left:0;top:0">
<g fill="#d9a25c" stroke="#b8823f" stroke-width=".8">
<ellipse cx="28" cy="23" rx="10" ry="5"/><ellipse cx="42" cy="25" rx="9" ry="5"/><ellipse cx="46" cy="34" rx="9" ry="5.500"/><ellipse cx="36" cy="43" rx="10" ry="6"/><ellipse cx="20" cy="43" rx="10" ry="6"/><ellipse cx="12" cy="33" rx="9" ry="5.500"/><ellipse cx="15" cy="25" rx="9" ry="5"/><ellipse cx="29" cy="33" rx="9" ry="5"/>
</g></svg></div>
<div class="th" style="left:799.500px;top:383.500px;width:58px;height:56px;background:#b98c5e">
<svg width="57" height="55" viewBox="0 0 57 55" style="left:0;top:0">
<path d="M0,0 L40,0 L0,28Z" fill="#ece8e6"/>
<path d="M0,28 L40,0 L57,0 L57,55 L0,55Z" fill="#b58a5c"/>
<path d="M44,0 L57,0 L57,14 L46,10Z" fill="#2e2a28"/>
<path d="M3,43 L36,13 L57,24 L57,30 L22,55 L6,55Z" fill="#e6e4e0"/>
<path d="M8,45 L36,19 M14,49 L41,23 M20,53 L47,27 M12,38 L28,53 M20,31 L36,45 M28,24 L44,37" stroke="#c9c6c0" stroke-width=".8"/>
<path d="M38,12 L52,8 L57,14 L57,24 L40,14Z" fill="#4a4440"/>
</svg></div>
<div class="th" style="left:866px;top:383.500px;width:57px;height:56px">
<svg width="56" height="55" viewBox="0 0 56 55" style="left:0;top:0">
<rect x="17" y="14" width="24" height="33" rx="1" fill="#ead3b4"/>
<rect x="27" y="12" width="4" height="3" fill="#ead3b4"/>
<path d="M10,27 L48,27" stroke="#f2e6d6" stroke-width="1"/>
<circle cx="6" cy="5" r="3" fill="#3f8a5a"/><circle cx="6" cy="5" r="1.300" fill="#fff"/>
<rect x="3" y="9.500" width="7" height="1.500" fill="#8ab09a"/>
</svg></div>
<!-- BOTTOM STRIP -->
<div class="card" style="left:25px;top:494px;width:125px;height:16px"></div>
<div class="a" style="left:158px;top:498px;width:116px;height:12px;background:#9a7762;overflow:hidden">
<div class="a" style="left:28px;top:-3px;width:58px;height:40px;border-radius:50%;background:#c9bba6"></div>
<div class="a" style="left:34px;top:2px;width:44px;height:36px;border-radius:50%;background:#c2b19e"></div>
</div>
<div class="card" style="left:284px;width:188px"></div>
<div class="card" style="left:484px;width:184px"></div>
<div class="card" style="left:776px;width:197px"></div>
<svg class="a" style="left:0;top:0" width="1024" height="575" viewBox="0 0 1024 575">
<path d="M370,510 L386,501 L402,510Z" fill="#e9a84c"/>
<path d="M607,510 Q607,501 615,500.500 Q623,501 623,510Z" fill="#d8a25a"/>
<path d="M846,510 Q848,503 860,502.500 Q871,503 873,510Z" fill="#d39a4c"/>
<path d="M916,510 Q918,503 928,502.500 Q938,503 939.500,510Z" fill="#c98a3c"/>
</svg>
<!-- status avatars -->
<svg class="a" style="left:953px;top:520px" width="21" height="21" viewBox="0 0 21 21">
<rect x=".75" y=".75" width="19.500" height="19.500" fill="#aab6be" stroke="#3d8bc2" stroke-width="1.500"/>
<circle cx="10.500" cy="8" r="3.700" fill="#f4f6f7"/>
<path d="M4,19.500 L4,15.500 Q4,12.200 7.500,12 L13.500,12 Q17,12.200 17,15.500 L17,19.500Z" fill="#f4f6f7"/>
</svg>
<svg class="a" style="left:977px;top:521.500px" width="18" height="18.500" viewBox="0 0 18 18.500">
<rect width="18" height="18.500" fill="#b1b1b1"/>
<circle cx="9" cy="6.500" r="3.600" fill="#fff"/>
<path d="M2.500,18.500 L2.500,14 Q2.500,10.700 6,10.500 L12,10.500 Q15.500,10.700 15.500,14 L15.500,18.500Z" fill="#fff"/>
</svg>
<svg class="a" style="left:0;top:0" width="1024" height="575" viewBox="0 0 1024 575" fill="none">
<path d="M1009.500,532.500 L1012.400,529.300 L1015.300,532.500" stroke="#555" stroke-width="1.400"/>
</svg>
<!-- TASKBAR ICONS -->
<div class="a" style="left:45px;top:546px;width:43px;height:28px;background:rgba(255,255,255,.16);border:1px solid rgba(255,255,255,.22)"></div>
<div class="a" style="left:137.500px;top:546px;width:41.500px;height:28px;background:rgba(255,255,255,.36);border:1px solid rgba(255,255,255,.5)"></div>
<div class="a" style="left:179.500px;top:546px;width:2.500px;height:28px;background:rgba(255,255,255,.55)"></div>
<svg class="a" style="left:0;top:545px" width="1024" height="30" viewBox="0 545 1024 30">
<defs>
<radialGradient id="orb" cx=".5" cy=".35" r=".7"><stop offset="0" stop-color="#4aa3e0"/><stop offset=".6" stop-color="#1d67a8"/><stop offset="1" stop-color="#0d3f73"/></radialGradient>
</defs>
<circle cx="19.500" cy="559.700" r="13" fill="url(#orb)"/>
<path d="M7.500,566 Q19.500,574 31.500,566 Q27,573.500 19.500,573 Q12,573.500 7.500,566Z" fill="#47c0e8" opacity=".8"/>
<path d="M13,554.500 Q16,553 19,554.500 L18.300,559.500 Q15.500,558.300 12.300,559.500Z" fill="#e8572b"/>
<path d="M20.200,554.800 Q23,556.300 26.500,554.800 L25.800,559.800 Q22.500,561 19.500,559.800Z" fill="#7dc242"/>
<path d="M12,560.700 Q15.300,559.500 18.100,560.700 L17.400,565.500 Q14.500,564.300 11.300,565.500Z" fill="#3fa0e0"/>
<path d="M19.300,561 Q22.300,562.300 25.600,561 L24.900,565.800 Q21.800,567 18.600,565.800Z" fill="#f8c020"/>
<!-- IE -->
<g fill="none">
<path d="M76.300,560.800 L60.500,560.800" stroke="#4fc3f2" stroke-width="3.800"/>
<path d="M75.200,565.300 A8,8 0 1 1 76.300,560.800" stroke="#4fc3f2" stroke-width="4.400"/>
<path d="M58.500,568.500 Q54,566 62,556 Q70,547.500 77.500,548.200 Q81,549.500 78,554" stroke="#f3c93c" stroke-width="1.700"/>
</g>
<!-- Explorer -->
<g>
<path d="M101.500,552.500 L101.500,569 L125,569 L125,553.500 L112,553.500 L110.500,551 L103,551Z" fill="#f3dc8e"/>
<rect x="102.500" y="555" width="21.500" height="13" fill="#f7e7ae"/>
<path d="M105.500,571 L105.500,563.500 Q105.500,562 107,562 L120,562 Q121.500,562 121.500,563.500 L121.500,571Z" fill="#5ea6dd"/>
<rect x="108.500" y="565" width="10" height="3" fill="#c7e2f5"/>
<path d="M104,553 L109,553 M112,555 L122,555" stroke="#8a7a4a" stroke-width=".8"/>
</g>
<!-- Outlook -->
<g>
<rect x="156.500" y="554.500" width="12.500" height="10.500" fill="#fff"/>
<path d="M156.500,554.500 L162.800,560 L169,554.500" stroke="#0072c6" stroke-width="1.200" fill="none"/>
<path d="M146,551 L160,548.500 L160,571.500 L146,568.500Z" fill="#0072c6"/>
<ellipse cx="152.800" cy="560" rx="3.300" ry="4.200" fill="none" stroke="#fff" stroke-width="2"/>
</g>
<!-- tray -->
<g fill="#fff" stroke="none">
<path d="M878.700,562.300 L883.500,562.300 L881.100,559.300Z"/>
<rect x="899" y="556" width="6" height="10" fill="none" stroke="#fff" stroke-width="1.200"/>
<rect x="900.800" y="558" width="2.400" height="6.500"/>
<rect x="895.700" y="555.800" width="1.300" height="10.500"/><rect x="894.500" y="558.500" width="3.700" height="2.200"/>
<rect x="912.300" y="555.800" width="1.300" height="10.500"/>
<path d="M913.600,556.300 L918.500,556.300 L918.500,557.800 L923,557.800 L921,560.200 L923,562.300 L917,562.300 L917,561 L913.600,561Z"/>
<path d="M932,559 L934.500,559 L937.500,556.500 L937.500,565 L934.500,562.500 L932,562.500Z"/>
<path d="M939,558.500 Q940.800,560.700 939,563" stroke="#ccc" stroke-width=".9" fill="none"/>
<rect x="951" y="556.500" width="7.500" height="6" fill="none" stroke="#fff" stroke-width="1.200"/>
<rect x="954" y="562.500" width="1.300" height="2.500"/><rect x="951.500" y="565" width="6.500" height="1.200"/>
<circle cx="949.800" cy="557.500" r="1.500" fill="none" stroke="#fff" stroke-width=".9"/><rect x="949.300" y="559" width="1" height="4"/>
</g>
</svg>

</body>
</html>
